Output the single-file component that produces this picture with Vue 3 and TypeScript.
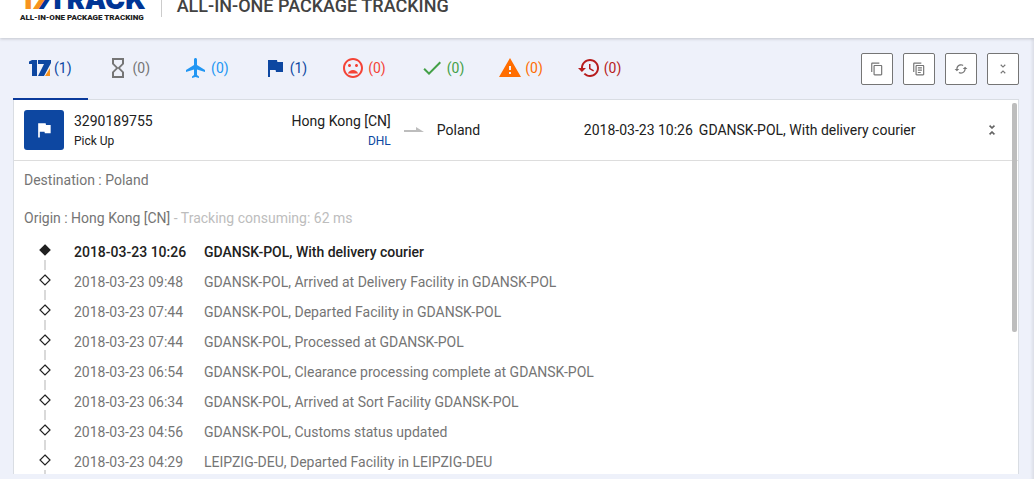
<script setup lang="ts">
import { ref } from 'vue'

interface Tab {
  id: string
  label: string
  count: number
  color: string
  path: string
}

interface TrackEvent {
  time: string
  text: string
}

const FLAG = 'M14.4 6L14 4H5v17h2v-7h5.6l.4 2h7V6z'
const COLLAPSE =
  'M7.41 18.59L8.83 20 12 16.83 15.17 20l1.41-1.41L12 14l-4.59 4.59zm9.18-13.18L15.17 4 12 7.17 8.83 4 7.41 5.41 12 10l4.59-4.59z'

const tabs: Tab[] = [
  { id: 'all', label: 'All', count: 1, color: 'navy', path: '' },
  {
    id: 'pending',
    label: 'Not found',
    count: 0,
    color: 'grey',
    path: 'M6 2v6h.01L6 8.01 10 12l-4 4 .01.01H6V22h12v-5.99h-.01L18 16l-4-4 4-3.99-.01-.01H18V2H6zm10 14.5V20H8v-3.5l4-4 4 4zm-4-5l-4-4V4h8v3.5l-4 4z',
  },
  {
    id: 'transit',
    label: 'In transit',
    count: 0,
    color: 'sky',
    path: 'M10.18 9M21 16v-2l-8-5V3.500c0-.83-.67-1.5-1.500-1.500S10 2.670 10 3.500V9l-8 5v2l8-2.500V19l-2 1.500V22l3.500-1 3.500 1v-1.500L13 19v-5.500l8 2.500z',
  },
  { id: 'pickup', label: 'Pick up', count: 1, color: 'navy', path: FLAG },
  {
    id: 'undelivered',
    label: 'Undelivered',
    count: 0,
    color: 'red',
    path: 'M12 14c-2.330 0-4.310 1.460-5.110 3.500h10.220c-.8-2.040-2.780-3.500-5.110-3.500zM11.990 2C6.470 2 2 6.480 2 12s4.470 10 9.990 10C17.520 22 22 17.520 22 12S17.520 2 11.990 2zM12 20c-4.420 0-8-3.580-8-8s3.580-8 8-8 8 3.580 8 8-3.580 8-8 8zM15.500 11c.83 0 1.500-.67 1.500-1.500S16.330 8 15.500 8 14 8.670 14 9.500s.67 1.500 1.500 1.500zM8.500 11c.83 0 1.500-.67 1.500-1.500S9.330 8 8.500 8 7 8.670 7 9.500 7.670 11 8.500 11z',
  },
  {
    id: 'delivered',
    label: 'Delivered',
    count: 0,
    color: 'green',
    path: 'M9 16.170L4.830 12l-1.420 1.410L9 19 21 7l-1.410-1.410z',
  },
  {
    id: 'alert',
    label: 'Alert',
    count: 0,
    color: 'orange',
    path: 'M1 21h22L12 2 1 21zm12-3h-2v-2h2v2zm0-4h-2v-4h2v4z',
  },
  {
    id: 'expired',
    label: 'Expired',
    count: 0,
    color: 'crimson',
    path: 'M13 3c-4.970 0-9 4.030-9 9H1l3.890 3.890.07.14L9 12H6c0-3.870 3.130-7 7-7s7 3.130 7 7-3.130 7-7 7c-1.930 0-3.680-.79-4.940-2.060l-1.420 1.420C8.270 19.990 10.510 21 13 21c4.970 0 9-4.030 9-9s-4.030-9-9-9zm-1 5v5l4.280 2.540.72-1.210-3.500-2.080V8H12z',
  },
]

const actions = [
  {
    label: 'Copy numbers',
    path: 'M16 1H4c-1.100 0-2 .9-2 2v14h2V3h12V1zm3 4H8c-1.100 0-2 .9-2 2v14c0 1.100.9 2 2 2h11c1.100 0 2-.9 2-2V7c0-1.100-.9-2-2-2zm0 16H8V7h11v14z',
  },
  {
    label: 'Copy details',
    path: 'M16 1H4c-1.100 0-2 .9-2 2v14h2V3h12V1zm3 4H8c-1.100 0-2 .9-2 2v14c0 1.100.9 2 2 2h11c1.100 0 2-.9 2-2V7c0-1.100-.9-2-2-2zm0 16H8V7h11v14zM10 9h7v2h-7zM10 13h7v2h-7zM10 17h5v2h-5z',
  },
  {
    label: 'Refresh',
    path: 'M19 8l-4 4h3c0 3.310-2.690 6-6 6-1.010 0-1.970-.25-2.800-.7l-1.460 1.460C8.970 19.540 10.430 20 12 20c4.420 0 8-3.580 8-8h3l-4-4zM6 12c0-3.310 2.690-6 6-6 1.010 0 1.970.25 2.800.7l1.460-1.460C15.030 4.460 13.570 4 12 4c-4.420 0-8 3.580-8 8H1l4 4 4-4H6z',
  },
  { label: 'Collapse all', path: COLLAPSE },
]

const events: TrackEvent[] = [
  { time: '2018-03-23 10:26', text: 'GDANSK-POL, With delivery courier' },
  { time: '2018-03-23 09:48', text: 'GDANSK-POL, Arrived at Delivery Facility in GDANSK-POL' },
  { time: '2018-03-23 07:44', text: 'GDANSK-POL, Departed Facility in GDANSK-POL' },
  { time: '2018-03-23 07:44', text: 'GDANSK-POL, Processed at GDANSK-POL' },
  { time: '2018-03-23 06:54', text: 'GDANSK-POL, Clearance processing complete at GDANSK-POL' },
  { time: '2018-03-23 06:34', text: 'GDANSK-POL, Arrived at Sort Facility GDANSK-POL' },
  { time: '2018-03-23 04:56', text: 'GDANSK-POL, Customs status updated' },
  { time: '2018-03-23 04:29', text: 'LEIPZIG-DEU, Departed Facility in LEIPZIG-DEU' },
]

const active = ref('all')
</script>

<template>
  <div class="page">
    <header class="header">
      <a class="logo" href="#">
        <span class="wordmark"><span class="one">1</span><span class="seven">7</span>TRACK</span>
        <span class="tagline">ALL-IN-ONE PACKAGE TRACKING</span>
      </a>
      <span class="divider"></span>
      <h1>ALL-IN-ONE PACKAGE TRACKING</h1>
    </header>

    <main class="main">
      <div class="toolbar">
        <nav class="tabs">
          <button
            v-for="tab in tabs"
            :key="tab.id"
            type="button"
            class="tab"
            :class="[tab.color, { active: tab.id === active }]"
            :aria-label="`${tab.label} (${tab.count})`"
            @click="active = tab.id"
          >
            <svg v-if="tab.path" class="icon" viewBox="0 0 24 24"><path :d="tab.path" /></svg>
            <svg v-else class="mark" viewBox="0 0 22 18">
              <path d="M0 2.500L3 1h5v16H3V5H0z" />
              <path d="M9 1h13v3L15 17H9l6-12H9z" />
              <path class="accent" d="M21 9v8h-5z" />
            </svg>
            <span>({{ tab.count }})</span>
          </button>
        </nav>
        <div class="actions">
          <button v-for="a in actions" :key="a.label" type="button" class="action" :aria-label="a.label">
            <svg viewBox="0 0 24 24"><path :d="a.path" /></svg>
          </button>
        </div>
      </div>

      <section class="card">
        <div class="summary">
          <div class="status"><svg viewBox="0 0 24 24"><path :d="FLAG" /></svg></div>
          <div class="parcel">
            <div>3290189755</div>
            <div class="small">Pick Up</div>
          </div>
          <div class="origin">
            <div>Hong Kong [CN]</div>
            <a class="small" href="#">DHL</a>
          </div>
          <svg class="arrow" viewBox="0 0 20 6"><path d="M0 3h12V0l8 5H0z" /></svg>
          <div class="country">Poland</div>
          <div class="latest"><span>{{ events[0].time }}</span><span>{{ events[0].text }}</span></div>
          <button type="button" class="collapse" aria-label="Collapse">
            <svg viewBox="0 0 24 24"><path :d="COLLAPSE" /></svg>
          </button>
        </div>

        <div class="details">
          <p>Destination : Poland</p>
          <p>Origin : Hong Kong [CN]<span class="muted"> - Tracking consuming: 62 ms</span></p>
          <ol class="events">
            <li v-for="(e, i) in events" :key="i">
              <svg class="node" viewBox="0 0 12 30">
                <path class="diamond" d="M6 8L11 13 6 18 1 13z" />
                <path class="stem" d="M6 23v10" />
              </svg>
              <time>{{ e.time }}</time>
              <span>{{ e.text }}</span>
            </li>
          </ol>
        </div>
        <span class="thumb"></span>
      </section>
    </main>
  </div>
</template>

<style>
body {
  margin: 0;
  background: #eef1fa;
}
</style>

<style scoped>
.page {
  display: flex;
  flex-direction: column;
  box-sizing: border-box;
  height: 100vh;
  overflow: hidden;
  font: 14px/20px Roboto, 'Liberation Sans', sans-serif;
  color: #212121;
  background: #eef1fa;
}
button {
  font: inherit;
  color: inherit;
  padding: 0;
  cursor: pointer;
}
svg {
  display: block;
  fill: currentColor;
}
.header {
  display: flex;
  align-items: flex-end;
  flex: none;
  box-sizing: border-box;
  height: 38px;
  padding: 0 20px 15px;
  background: #fff;
  box-shadow: 0 1px 3px rgba(0, 0, 0, 0.18);
}
.logo {
  display: flex;
  flex-direction: column;
  color: #212121;
  text-decoration: none;
  white-space: nowrap;
}
.wordmark {
  font: 900 27px/27px Inter, sans-serif;
  color: #003595;
}
.one,
.seven {
  color: #f7931e;
}
.seven {
  font-style: italic;
  text-shadow: 5px 0 #003595;
}
.tagline {
  font: 900 8px/10px Roboto, sans-serif;
}
.divider {
  width: 1px;
  height: 28px;
  margin: 0 15px 6px;
  background: #ccc;
}
h1 {
  margin: 0 0 6px;
  font-size: 18px;
  line-height: 22px;
  font-weight: 500;
  color: #424242;
}
.main {
  display: flex;
  flex-direction: column;
  flex: 1;
  min-height: 0;
  padding: 0 15px 5px 13px;
  box-shadow: inset -4px 0 3px -2px rgba(0, 0, 0, 0.08);
}
.toolbar {
  display: flex;
  justify-content: space-between;
  align-items: center;
  flex: none;
  z-index: 1;
  height: 62px;
  margin-bottom: -1px;
}
.tabs {
  display: flex;
  align-self: stretch;
  gap: 3px;
}
.tab {
  display: flex;
  align-items: center;
  gap: 3px;
  padding: 0 16px;
  border: 0;
  border-bottom: 2px solid transparent;
  background: none;
}
.tab.active {
  border-bottom-color: #0a3a9b;
}
.icon {
  width: 24px;
  height: 24px;
  margin-left: -1px;
}
.mark {
  width: 22px;
  height: 18px;
}
.accent { fill: #f7931e; }
.navy { color: #0d47a1; }
.grey { color: #757575; }
.sky { color: #2196f3; }
.red { color: #f44336; }
.green { color: #43a047; }
.orange { color: #ff6d00; }
.crimson { color: #b71c1c; }
.actions {
  display: flex;
  gap: 10px;
}
.action {
  display: grid;
  place-items: center;
  width: 32px;
  height: 32px;
  border: 1px solid #757575;
  border-radius: 2px;
  background: #fff;
  color: #757575;
}
.action svg,
.collapse svg {
  width: 14px;
  height: 14px;
}
.card {
  position: relative;
  flex: 1;
  min-height: 0;
  overflow: hidden;
  border: 1px solid #d9dde3;
  border-bottom: 0;
  background: #fff;
}
.summary {
  display: grid;
  grid-template-columns: 40px 5fr 5fr 33px 160px 12fr 32px;
  align-items: center;
  height: 60px;
  padding: 0 10px;
  border-bottom: 1px solid #ddd;
}
.status {
  display: grid;
  place-items: center;
  width: 40px;
  height: 40px;
  border-radius: 3px;
  background: #0d47a1;
  color: #fff;
}
.status svg {
  width: 20px;
  height: 20px;
}
.parcel,
.origin {
  padding-top: 2px;
}
.parcel {
  padding-left: 10px;
}
.small {
  font-size: 12px;
  line-height: 20px;
}
.origin {
  text-align: right;
  white-space: nowrap;
}
.origin a {
  display: block;
  color: #0d47a1;
  text-decoration: none;
}
.arrow {
  width: 20px;
  height: 6px;
  margin-left: 13px;
  color: #bdbdbd;
}
.country {
  padding-left: 13px;
}
.latest {
  display: flex;
  gap: 6px;
  white-space: nowrap;
}
.collapse {
  display: grid;
  place-items: center;
  width: 32px;
  height: 32px;
  border: 0;
  background: none;
  color: #616161;
}
.collapse svg {
  stroke: currentColor;
}
.details {
  padding: 9px 10px;
  color: #757575;
}
p {
  margin: 0 0 18px;
}
.muted {
  color: #bdbdbd;
}
.events {
  margin: -9px 0 0;
  padding: 0;
  list-style: none;
}
li {
  display: flex;
  height: 30px;
  line-height: 30px;
}
.node {
  width: 12px;
  height: 30px;
  margin: 0 23px 0 15px;
  overflow: visible;
}
.diamond {
  fill: #fff;
  stroke: #212121;
  stroke-width: 1.2;
}
.stem {
  stroke: #ccc;
  stroke-width: 1.5;
}
time {
  width: 130px;
}
li:first-child {
  font-weight: 500;
  color: #212121;
}
li:first-child .diamond {
  fill: #212121;
}
.thumb {
  position: absolute;
  top: 3px;
  right: 1px;
  width: 5px;
  height: 229px;
  border-radius: 2px;
  background: #bdbdbd;
}
</style>
